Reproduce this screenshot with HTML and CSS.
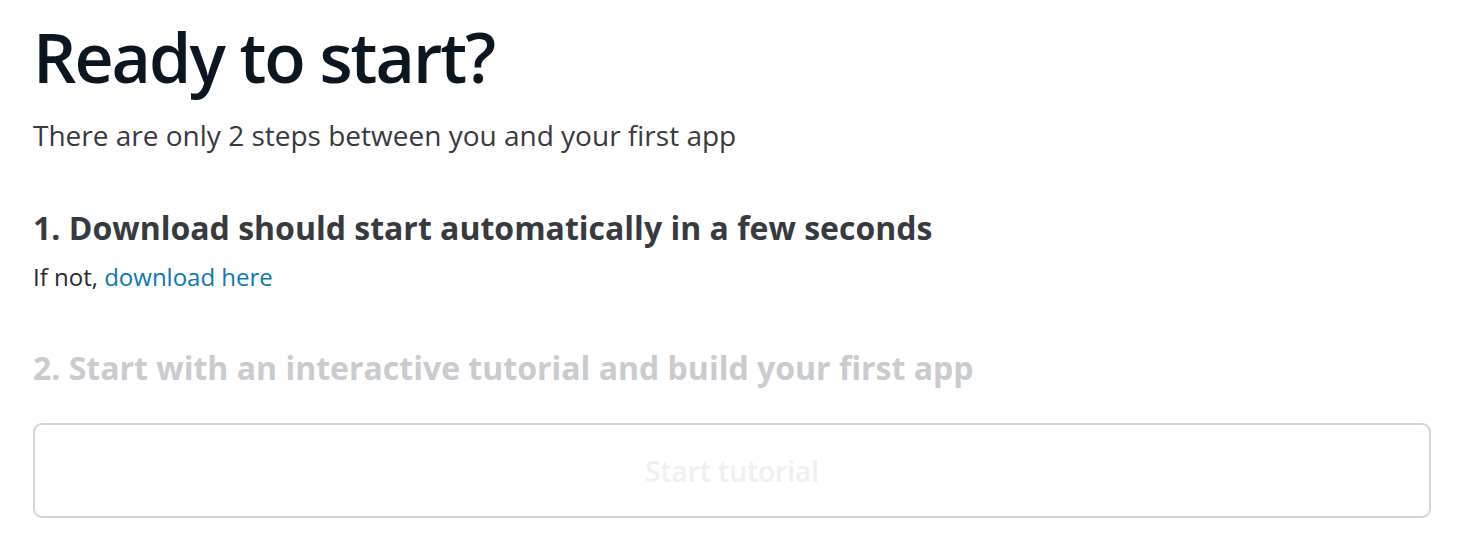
FILE: index.html
```html
<!DOCTYPE html>
<html lang="en">
<head>
<meta charset="utf-8">
<title>Ready to start?</title>
<link rel="stylesheet" href="styles.css">
</head>
<body>
<main class="page">
  <h1 class="title">Ready to start?</h1>
  <p class="lead">There are only 2 steps between you and your first app</p>
  <section class="step">
    <h2 class="step-title">1. Download should start automatically in a few seconds</h2>
    <p class="step-text">If not, <a class="link" href="#">download here</a></p>
  </section>
  <section class="step step-disabled">
    <h2 class="step-title">2. Start with an interactive tutorial and build your first app</h2>
    <button class="btn" type="button" disabled>Start tutorial</button>
  </section>
</main>
</body>
</html>
```
FILE: styles.css
```css
* { box-sizing: border-box; }
html, body { margin: 0; padding: 0; background: #fff; }
.page {
  padding: 13px 31px 0 33px;
  font-family: "Open Sans", "Noto Sans", sans-serif;
}
.title {
  margin: 0;
  font-family: "Open Sans", sans-serif;
  font-weight: 600;
  font-size: 68px;
  line-height: 88px;
  letter-spacing: -2px;
  color: #0c1620;
}
.lead {
  margin: 15px 0 0;
  font-size: 28px;
  line-height: 38px;
  color: #373a3f;
}
.step { margin-top: 52px; }
.step-title {
  margin: 0;
  font-size: 32px;
  line-height: 44px;
  font-weight: 700;
  color: #373a3f;
}
.step-text {
  margin: 10px 0 0;
  font-size: 24px;
  line-height: 34px;
  color: #272a2e;
}
.link { color: #0b78b5; text-decoration: none; }
.step-disabled { margin-top: 52px; }
.step-disabled .step-title { color: #c9cbce; }
.btn {
  display: block;
  width: 100%;
  height: 95px;
  margin-top: 33px;
  border: 2px solid #d4d4d4;
  border-radius: 9px;
  background: #fff;
  font-family: "Open Sans", sans-serif;
  font-weight: 600;
  font-size: 28px;
  color: #eef0f2;
}
```
